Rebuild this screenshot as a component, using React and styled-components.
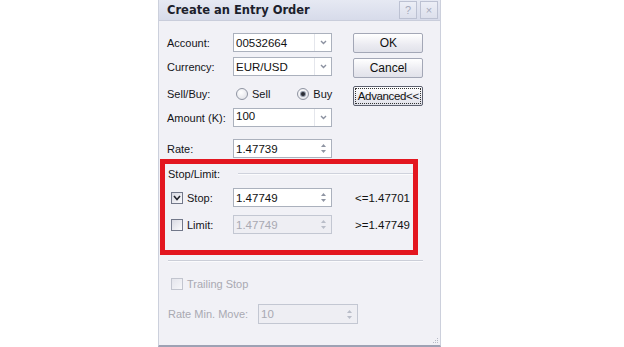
import styled, { createGlobalStyle, css } from "styled-components";

const GlobalStyle = createGlobalStyle`
  html, body {
    margin: 0;
    padding: 0;
    background: #ffffff;
  }
  body {
    font-family: "Liberation Sans", Arial, sans-serif;
    font-size: 11px;
    color: #141418;
  }
`;

const Page = styled.div`
  padding-left: 158px;
  height: 347px;
`;

const Dialog = styled.div`
  box-sizing: border-box;
  width: 283px;
  height: 347px;
  background: #f1f1f6;
  border-left: 1px solid #ccd0dc;
  border-right: 1px solid #ccd0dc;
  border-bottom: 2px solid #9ea2b4;
  display: flex;
  flex-direction: column;
  position: relative;
`;

const TitleBar = styled.div`
  box-sizing: border-box;
  height: 21px;
  display: flex;
  align-items: center;
  padding: 0 2px 0 8px;
  background: linear-gradient(#e6e9f3, #d7dbea);
  border-bottom: 1px solid #c9cddb;
`;

const Title = styled.div`
  flex: 1;
  font-family: "DejaVu Sans", Verdana, sans-serif;
  font-weight: bold;
  font-size: 11.5px;
  color: #1c1e2c;
`;

const CaptionButton = styled.div`
  box-sizing: border-box;
  width: 18px;
  height: 18px;
  margin-left: 3px;
  border: 1px solid #bcc1d2;
  background: linear-gradient(#eceef6, #dde0ec);
  color: #a5a9bb;
  font-size: 11px;
  display: flex;
  align-items: center;
  justify-content: center;
`;

const Body = styled.div`
  display: flex;
  flex-direction: column;
  padding-top: 12px;
`;

const TopSection = styled.div`
  display: flex;
  align-items: flex-start;
`;

const FormColumn = styled.div`
  margin-left: 8px;
  display: flex;
  flex-direction: column;
`;

const Row = styled.div`
  display: grid;
  grid-template-columns: ${(p) => p.$label || 66}px auto auto;
  align-items: center;
  height: ${(p) => p.$h || 19}px;
  margin-top: ${(p) => p.$mt || 0}px;
`;

const Label = styled.span`
  color: ${(p) => (p.$disabled ? "#a9a9b2" : "#141418")};
  white-space: nowrap;
`;

const Field = styled.div`
  box-sizing: border-box;
  width: ${(p) => p.$w || 99}px;
  height: ${(p) => p.$h || 19}px;
  border: 1px solid ${(p) => (p.$disabled ? "#c3c7d2" : "#abb1bd")};
  background: ${(p) => (p.$disabled ? "#eeeef3" : "#ffffff")};
  display: flex;
  align-items: ${(p) => (p.$top ? "flex-start" : "center")};
`;

const FieldText = styled.span`
  flex: 1;
  padding: ${(p) => (p.$top ? "1px 0 0 2px" : "0 0 0 2px")};
  font-size: 11.5px;
  color: ${(p) => (p.$disabled ? "#a9a9b2" : "#111")};
`;

const DropButton = styled.div`
  width: 16px;
  align-self: stretch;
  border-left: 1px solid #e4e6ec;
  display: flex;
  align-items: center;
  justify-content: center;
`;

const Spinner = styled.div`
  width: 16px;
  align-self: stretch;
  display: flex;
  flex-direction: column;
  align-items: center;
  justify-content: center;
  gap: 3px;
`;

const RadioGroup = styled.div`
  display: flex;
  align-items: center;
`;

const RadioItem = styled.label`
  display: flex;
  align-items: center;
  gap: 4px;
  margin-left: ${(p) => p.$ml || 0}px;
`;

const RadioCircle = styled.span`
  box-sizing: border-box;
  width: 12px;
  height: 12px;
  border-radius: 50%;
  border: 1px solid #8f94a2;
  background: radial-gradient(circle at 40% 35%, #ffffff, #dcdde4);
  display: flex;
  align-items: center;
  justify-content: center;
  &::after {
    content: "";
    width: 4px;
    height: 4px;
    border-radius: 50%;
    background: #2b2d35;
    box-shadow: 0 0 0 1px #8f97a8;
    display: ${(p) => (p.$checked ? "block" : "none")};
  }
`;

const ButtonColumn = styled.div`
  margin-left: 21px;
  display: flex;
  flex-direction: column;
`;

const DialogButton = styled.div`
  box-sizing: border-box;
  width: 70px;
  height: 20px;
  margin-top: ${(p) => p.$mt || 0}px;
  border: 1px solid ${(p) => (p.$focused ? "#5d6170" : "#a3a7b6")};
  border-radius: 2px;
  background: linear-gradient(#ffffff, #ebebf1 60%, #e1e2ea);
  display: flex;
  align-items: center;
  justify-content: center;
  font-size: 12px;
  color: #111;
  white-space: nowrap;
  ${(p) =>
    p.$focused &&
    css`
      padding: 1px;
      font-size: 11.5px;
      letter-spacing: -0.35px;
      span {
        flex: 1;
        align-self: stretch;
        display: flex;
        align-items: center;
        justify-content: center;
        outline: 1px dotted #333;
        outline-offset: -1px;
      }
    `}
`;

const RedGroup = styled.div`
  box-sizing: border-box;
  width: 258px;
  height: 96px;
  margin: 1px 0 0 1px;
  border: 5px solid #e3161f;
  display: flex;
  flex-direction: column;
`;

const GroupHeader = styled.div`
  display: flex;
  align-items: center;
  height: 14px;
  margin-top: 3px;
  padding-left: 3px;
`;

const Line = styled.div`
  flex: 1;
  margin-left: 18px;
  height: 1px;
  background: #cfd2dc;
  border-bottom: 1px solid #fbfbfd;
`;

const GroupRow = styled(Row)`
  padding-left: 6px;
  grid-template-columns: 62px 99px auto;
`;

const CheckLabel = styled.label`
  display: flex;
  align-items: center;
  gap: 4px;
  color: ${(p) => (p.$disabled ? "#a9a9b2" : "#141418")};
`;

const Box = styled.span`
  box-sizing: border-box;
  width: 12px;
  height: 12px;
  border: 1px solid ${(p) => (p.$disabled ? "#c2c5cf" : "#72788a")};
  background: ${(p) =>
    p.$disabled
      ? "linear-gradient(135deg, #e4e5ec, #f6f6f9)"
      : "linear-gradient(135deg, #d8d9e2, #fbfbfd)"};
  display: flex;
  align-items: center;
  justify-content: center;
`;

const Bound = styled.span`
  margin-left: 23px;
  font-size: 11.5px;
  color: #111;
`;

const Separator = styled.div`
  width: 255px;
  margin: 5px 0 0 9px;
  height: 1px;
  background: #cbced8;
  border-bottom: 1px solid #fbfbfd;
`;

const TrailingRow = styled.div`
  display: flex;
  align-items: center;
  height: 14px;
  margin: 15px 0 0 12px;
`;

const MoveRow = styled(Row)`
  margin-left: 9px;
  grid-template-columns: 90px auto;
  height: 20px;
`;

const Grip = styled.svg`
  position: absolute;
  right: 1px;
  bottom: 1px;
`;

const Chevron = () => (
  <svg width="7" height="5" viewBox="0 0 7 5">
    <polyline points="1,1 3.5,3.5 6,1" fill="none" stroke="#8b91a0" strokeWidth="1.4" />
  </svg>
);

const Arrows = ({ color = "#8f95a3" }) => (
  <Spinner>
    <svg width="5" height="3" viewBox="0 0 5 3">
      <polygon points="0,3 2.5,0 5,3" fill={color} />
    </svg>
    <svg width="5" height="3" viewBox="0 0 5 3">
      <polygon points="0,0 5,0 2.5,3" fill={color} />
    </svg>
  </Spinner>
);

const Check = () => (
  <svg width="8" height="7" viewBox="0 0 8 7">
    <polyline points="1,2 4,5.5 7,2" fill="none" stroke="#22242c" strokeWidth="1.6" />
  </svg>
);

export default function App() {
  return (
    <Page>
      <GlobalStyle />
      <Dialog>
        <TitleBar>
          <Title>Create an Entry Order</Title>
          <CaptionButton>?</CaptionButton>
          <CaptionButton>×</CaptionButton>
        </TitleBar>
        <Body>
          <TopSection>
            <FormColumn>
              <Row>
                <Label>Account:</Label>
                <Field>
                  <FieldText>00532664</FieldText>
                  <DropButton>
                    <Chevron />
                  </DropButton>
                </Field>
              </Row>
              <Row $mt={5}>
                <Label>Currency:</Label>
                <Field>
                  <FieldText>EUR/USD</FieldText>
                  <DropButton>
                    <Chevron />
                  </DropButton>
                </Field>
              </Row>
              <Row $mt={8}>
                <Label>Sell/Buy:</Label>
                <RadioGroup>
                  <RadioItem $ml={3}>
                    <RadioCircle />
                    Sell
                  </RadioItem>
                  <RadioItem $ml={27}>
                    <RadioCircle $checked />
                    Buy
                  </RadioItem>
                </RadioGroup>
              </Row>
              <Row $mt={5}>
                <Label>Amount (K):</Label>
                <Field $top>
                  <FieldText $top>100</FieldText>
                  <DropButton>
                    <Chevron />
                  </DropButton>
                </Field>
              </Row>
              <Row $mt={12}>
                <Label>Rate:</Label>
                <Field>
                  <FieldText>1.47739</FieldText>
                  <Arrows />
                </Field>
              </Row>
            </FormColumn>
            <ButtonColumn>
              <DialogButton>OK</DialogButton>
              <DialogButton $mt={5}>Cancel</DialogButton>
              <DialogButton $mt={8} $focused>
                <span>Advanced&lt;&lt;</span>
              </DialogButton>
            </ButtonColumn>
          </TopSection>

          <RedGroup>
            <GroupHeader>
              <Label>Stop/Limit:</Label>
              <Line />
            </GroupHeader>
            <GroupRow $mt={7}>
              <CheckLabel>
                <Box>
                  <Check />
                </Box>
                Stop:
              </CheckLabel>
              <Field>
                <FieldText>1.47749</FieldText>
                <Arrows />
              </Field>
              <Bound>&lt;=1.47701</Bound>
            </GroupRow>
            <GroupRow $mt={8}>
              <CheckLabel>
                <Box />
                Limit:
              </CheckLabel>
              <Field $disabled>
                <FieldText $disabled>1.47749</FieldText>
                <Arrows color="#b9bdc8" />
              </Field>
              <Bound>&gt;=1.47749</Bound>
            </GroupRow>
          </RedGroup>

          <Separator />

          <TrailingRow>
            <CheckLabel $disabled>
              <Box $disabled />
              Trailing Stop
            </CheckLabel>
          </TrailingRow>

          <MoveRow $mt={13}>
            <Label $disabled>Rate Min. Move:</Label>
            <Field $disabled $w={100} $h={20}>
              <FieldText $disabled>10</FieldText>
              <Arrows color="#b9bdc8" />
            </Field>
          </MoveRow>
        </Body>
        <Grip width="6" height="6" viewBox="0 0 6 6">
          <rect x="4" y="0" width="1" height="1" fill="#b7bac6" />
          <rect x="2" y="2" width="1" height="1" fill="#b7bac6" />
          <rect x="4" y="2" width="1" height="1" fill="#b7bac6" />
          <rect x="0" y="4" width="1" height="1" fill="#b7bac6" />
          <rect x="2" y="4" width="1" height="1" fill="#b7bac6" />
          <rect x="4" y="4" width="1" height="1" fill="#b7bac6" />
        </Grip>
      </Dialog>
    </Page>
  );
}
